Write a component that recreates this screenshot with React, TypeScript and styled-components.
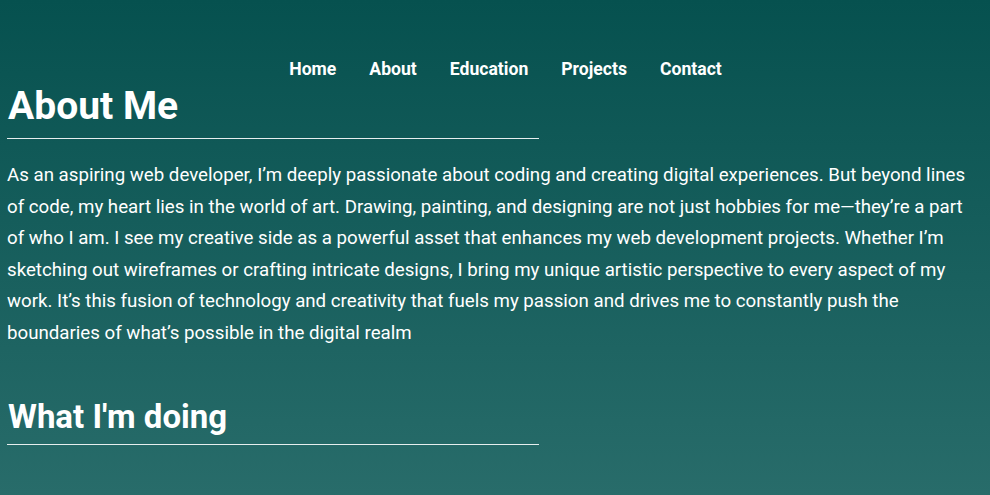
import styled, { createGlobalStyle } from "styled-components";

const GlobalStyle = createGlobalStyle`
  html, body {
    margin: 0;
    padding: 0;
  }
  body {
    font-family: Roboto, "Liberation Sans", sans-serif;
    color: #ffffff;
    background: #276b69;
  }
`;

const Page = styled.div`
  min-height: 100vh;
  background: linear-gradient(180deg, #06514f 0%, #286c6a 100%);
  padding: 0 7px 40px 7px;
  box-sizing: border-box;
  overflow: hidden;
`;

const Nav = styled.nav`
  display: flex;
  justify-content: center;
  gap: 33px;
  padding: 59px 0 0 21px;
`;

const NavLink = styled.a`
  font-size: 17.6px;
  font-weight: 700;
  color: #ffffff;
  text-decoration: none;
  line-height: 21px;
`;

const Heading = styled.h2<{ $size: number; $gap: number; $pad: number }>`
  margin: ${(p) => p.$gap}px 0 0;
  width: 531px;
  font-size: ${(p) => p.$size}px;
  font-weight: 700;
  line-height: normal;
  padding: 0 0 ${(p) => p.$pad}px 1px;
  border-bottom: 1px solid #e6eeee;
`;

const Text = styled.p`
  margin: 21px 0 0;
  font-size: 18.7px;
  line-height: 31.5px;
`;

const links = ["Home", "About", "Education", "Projects", "Contact"];

const App = () => {
  return (
    <>
      <GlobalStyle />
      <Page>
        <Nav>
          {links.map((l) => (
            <NavLink key={l} href={`#${l.toLowerCase()}`}>
              {l}
            </NavLink>
          ))}
        </Nav>
        <Heading $size={39} $gap={3} $pad={9}>
          About Me
        </Heading>
        <Text>
          As an aspiring web developer, I’m deeply passionate about coding and
          creating digital experiences. But beyond lines of code, my heart lies
          in the world of art. Drawing, painting, and designing are not just
          hobbies for me—they’re a part of who I am. I see my creative side as a
          powerful asset that enhances my web development projects. Whether I’m
          sketching out wireframes or crafting intricate designs, I bring my
          unique artistic perspective to every aspect of my work. It’s this
          fusion of technology and creativity that fuels my passion and drives
          me to constantly push the boundaries of what’s possible in the digital
          realm
        </Text>
        <Heading $size={33} $gap={48} $pad={8}>
          What I'm doing
        </Heading>
      </Page>
    </>
  );
};

export default App;
